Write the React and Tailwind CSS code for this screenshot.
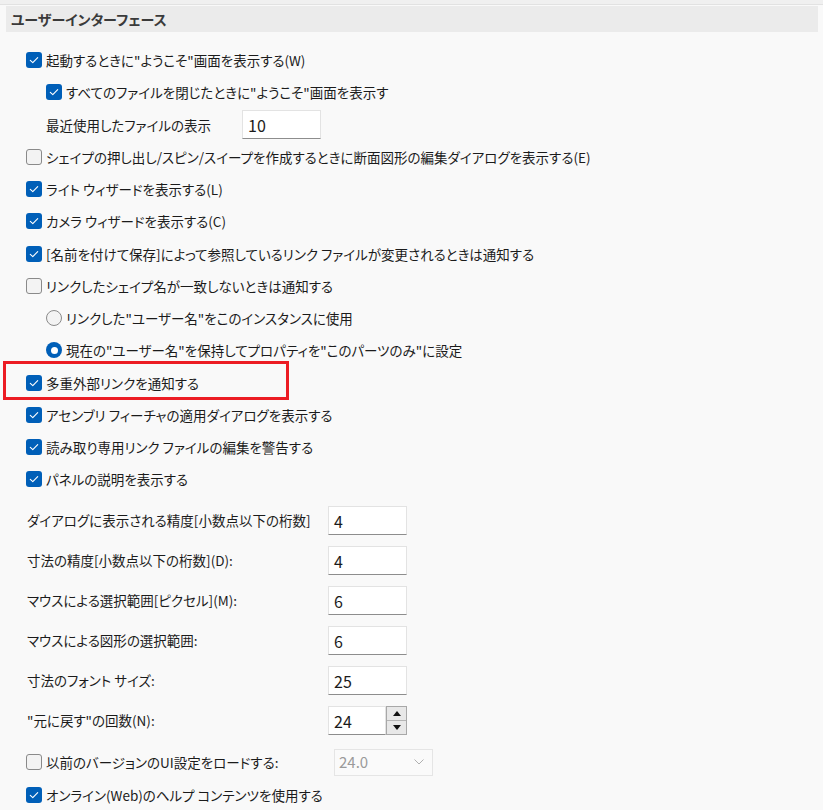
// ユーザーインターフェース設定パネル（Windows 11 風のオプション画面）。
// チェックボックス／ラジオ／数値入力を縦に並べるだけの静的な画面。

const Check = ({ checked }) =>
  checked ? (
    <span className="flex h-[16px] w-[16px] shrink-0 items-center justify-center rounded-[3px] bg-[#005fb8]">
      <svg viewBox="0 0 16 16" className="h-[16px] w-[16px]">
        <path d="M4.3 8.3 L6.8 10.6 L11.7 5.6" fill="none" stroke="#fff" strokeWidth="1.1" strokeLinecap="round" strokeLinejoin="round" />
      </svg>
    </span>
  ) : (
    <span className="h-[16px] w-[16px] shrink-0 rounded-[3px] border border-[#8a8a8a] bg-[#f3f3f3]" />
  );

const Radio = ({ checked }) =>
  checked ? (
    <span className="flex h-[16px] w-[16px] shrink-0 items-center justify-center rounded-full bg-[#005fb8]">
      <span className="h-[7px] w-[7px] rounded-full bg-white" />
    </span>
  ) : (
    <span className="h-[16px] w-[16px] shrink-0 rounded-full border border-[#8a8a8a] bg-[#f3f3f3]" />
  );

function Fila({ checked, radio, indent, children }) {
  return (
    <div className={`flex h-[32.25px] items-center gap-[4px] ${indent ? 'pl-5' : ''}`}>
      {radio ? <Radio checked={checked} /> : <Check checked={checked} />}
      <span className="whitespace-nowrap">{children}</span>
    </div>
  );
}

function Caja({ valor, className = '' }) {
  return (
    <div
      className={`flex h-[29px] items-center border border-[#e3e3e3] border-b-[#8d8d8d] bg-white pl-[5px] text-[16px] text-[#1b1b1b] ${className}`}
    >
      {valor}
    </div>
  );
}

function FilaNumero({ label, valor, spinner }) {
  return (
    <div className="flex h-10 items-center">
      <span className="w-[302px] whitespace-nowrap pl-px">{label}</span>
      {spinner ? (
        <div className="flex h-[29px] w-[79px]">
          <Caja valor={valor} className="w-[58px]" />
          <div className="flex w-[21px] flex-col border border-[#a8a8a8] bg-[#e8e8e8]">
            <div className="flex flex-1 items-center justify-center border-b border-[#b5b5b5]">
              <svg viewBox="0 0 8 5" className="h-[5px] w-[8px]"><path d="M0 5 L4 0 L8 5 Z" fill="#111" /></svg>
            </div>
            <div className="flex flex-1 items-center justify-center">
              <svg viewBox="0 0 8 5" className="h-[5px] w-[8px]"><path d="M0 0 L4 5 L8 0 Z" fill="#111" /></svg>
            </div>
          </div>
        </div>
      ) : (
        <Caja valor={valor} className="w-[79px]" />
      )}
    </div>
  );
}

const numeros = [
  { label: 'ダイアログに表示される精度[小数点以下の桁数]', valor: '4' },
  { label: '寸法の精度[小数点以下の桁数](D):', valor: '4' },
  { label: 'マウスによる選択範囲[ピクセル](M):', valor: '6' },
  { label: 'マウスによる図形の選択範囲:', valor: '6' },
  { label: '寸法のフォント サイズ:', valor: '25' },
  { label: '"元に戻す"の回数(N):', valor: '24', spinner: true },
];

export default function App() {
  return (
    <div className="h-[810px] w-[823px] overflow-hidden bg-[#f9f9f9] font-['Noto_Sans_CJK_JP','Noto_Sans',sans-serif] text-[13.5px] text-[#1b1b1b] [font-feature-settings:'palt']">
      <div className="h-[5px] border-b border-[#e2e2e2] bg-[#f0f0f0]" />
      <div className="ml-[6px] mt-[1px] flex h-[26px] w-[812px] items-center bg-[#ebebeb] pl-[5px] text-[14px] font-bold text-[#3a3a3a]">
        ユーザーインターフェース
      </div>

      <div className="pl-[26px] pt-[12px]">
        <Fila checked>起動するときに"ようこそ"画面を表示する(W)</Fila>
        <Fila checked indent>すべてのファイルを閉じたときに"ようこそ"画面を表示す</Fila>
        <div className="flex h-[32.25px] items-center pl-5">
          <span className="w-[196px] whitespace-nowrap">最近使用したファイルの表示</span>
          <Caja valor="10" className="h-[28px] w-[79px]" />
        </div>
        <Fila>シェイプの押し出し/スピン/スイープを作成するときに断面図形の編集ダイアログを表示する(E)</Fila>
        <Fila checked>ライト ウィザードを表示する(L)</Fila>
        <Fila checked>カメラ ウィザードを表示する(C)</Fila>
        <Fila checked>[名前を付けて保存]によって参照しているリンク ファイルが変更されるときは通知する</Fila>
        <Fila>リンクしたシェイプ名が一致しないときは通知する</Fila>
        <Fila radio indent>リンクした"ユーザー名"をこのインスタンスに使用</Fila>
        <Fila radio checked indent>現在の"ユーザー名"を保持してプロパティを"このパーツのみ"に設定</Fila>
        <div className="relative">
          <Fila checked>多重外部リンクを通知する</Fila>
          {/* 注目枠（スクリーンショット上の赤い囲み） */}
          <div className="pointer-events-none absolute -left-[23px] -top-[6px] h-[39px] w-[286px] border-[3px] border-[#ec1c24]" />
        </div>
        <Fila checked>アセンブリ フィーチャの適用ダイアログを表示する</Fila>
        <Fila checked>読み取り専用リンク ファイルの編集を警告する</Fila>
        <Fila checked>パネルの説明を表示する</Fila>

        <div className="mt-[5px]">
          {numeros.map((n) => (
            <FilaNumero key={n.label} {...n} />
          ))}
        </div>

        <div className="mt-[5px] flex h-[33px] items-center">
          <div className="flex w-[308px] items-center gap-[4px]">
            <Check />
            <span className="whitespace-nowrap">以前のバージョンのUI設定をロードする:</span>
          </div>
          <div className="flex h-[27px] w-[99px] items-center justify-between border border-[#e5e5e5] bg-[#fafafa] pl-[4px] pr-[8px] text-[15px] text-[#9a9a9a]">
            24.0
            <svg viewBox="0 0 10 6" className="h-[6px] w-[10px]"><path d="M0.5 0.5 L5 5 L9.5 0.5" fill="none" stroke="#b0b0b0" strokeWidth="1" /></svg>
          </div>
        </div>
        <Fila checked>オンライン(Web)のヘルプ コンテンツを使用する</Fila>
      </div>
    </div>
  );
}
